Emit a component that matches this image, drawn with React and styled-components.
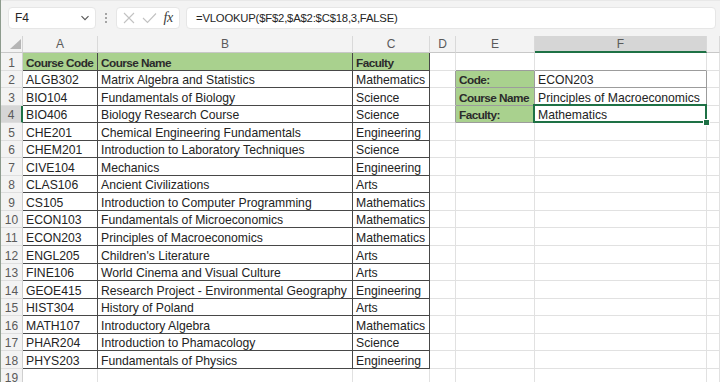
import styled, { createGlobalStyle, css } from 'styled-components';

const GlobalStyle = createGlobalStyle`
  html, body {
    margin: 0;
    padding: 0;
    background: #ffffff;
  }
`;

const GREEN = '#a9d18e';
const TABLE_LINE = '#474747';
const GRID_LINE = '#e1e1e1';
const BOX_LINE = '#9c9c9c';
const SELECT = '#1e7145';

const COLS = ['A', 'B', 'C', 'D', 'E', 'F', 'G'];

const courses = [
  ['Course Code', 'Course Name', 'Faculty'],
  ['ALGB302', 'Matrix Algebra and Statistics', 'Mathematics'],
  ['BIO104', 'Fundamentals of Biology', 'Science'],
  ['BIO406', 'Biology Research Course', 'Science'],
  ['CHE201', 'Chemical Engineering Fundamentals', 'Engineering'],
  ['CHEM201', 'Introduction to Laboratory Techniques', 'Science'],
  ['CIVE104', 'Mechanics', 'Engineering'],
  ['CLAS106', 'Ancient Civilizations', 'Arts'],
  ['CS105', 'Introduction to Computer Programming', 'Mathematics'],
  ['ECON103', 'Fundamentals of Microeconomics', 'Mathematics'],
  ['ECON203', 'Principles of Macroeconomics', 'Mathematics'],
  ['ENGL205', "Children's Literature", 'Arts'],
  ['FINE106', 'World Cinema and Visual Culture', 'Arts'],
  ['GEOE415', 'Research Project - Environmental Geography', 'Engineering'],
  ['HIST304', 'History of Poland', 'Arts'],
  ['MATH107', 'Introductory Algebra', 'Mathematics'],
  ['PHAR204', 'Introduction to Phamacology', 'Science'],
  ['PHYS203', 'Fundamentals of Physics', 'Engineering'],
];

const lookup = [
  ['Code:', 'ECON203'],
  ['Course Name', 'Principles of Macroeconomics'],
  ['Faculty:', 'Mathematics'],
];

const Window = styled.div`
  width: 720px;
  height: 382px;
  overflow: hidden;
  display: flex;
  flex-direction: column;
  border-left: 1px solid #8d9b8d;
  box-sizing: border-box;
  font-family: 'Liberation Sans', Arial, sans-serif;
  background: #ffffff;
`;

const FormulaBar = styled.div`
  height: 36px;
  flex: none;
  display: flex;
  align-items: flex-start;
  padding: 6px 0 0 7px;
  box-sizing: border-box;
  background: #f3f3f3;
  border-top: 1px solid #e8e8e8;
`;

const NameBox = styled.div`
  width: 88px;
  height: 22px;
  box-sizing: border-box;
  display: flex;
  align-items: center;
  justify-content: space-between;
  padding: 0 4px 0 6px;
  background: #ffffff;
  border: 1px solid #e6e6e6;
  border-radius: 4px;
  font-size: 12px;
  color: #262626;
`;

const Grip = styled.div`
  width: 20px;
  height: 22px;
  display: flex;
  flex-direction: column;
  align-items: center;
  justify-content: center;
  gap: 2px;

  & span {
    width: 2px;
    height: 2px;
    border-radius: 1px;
    background: #8a8a8a;
  }
`;

const ButtonGroup = styled.div`
  width: 64px;
  height: 22px;
  box-sizing: border-box;
  display: flex;
  align-items: center;
  justify-content: space-around;
  padding: 0 3px;
  background: #ffffff;
  border: 1px solid #e6e6e6;
  border-radius: 4px;
`;

const Fx = styled.span`
  font-family: 'Liberation Serif', 'Times New Roman', serif;
  font-style: italic;
  font-size: 14px;
  color: #3a3a3a;
  letter-spacing: -0.5px;
`;

const FormulaInput = styled.div`
  flex: 1;
  height: 22px;
  margin: 0 4px 0 6px;
  box-sizing: border-box;
  display: flex;
  align-items: center;
  padding-left: 9px;
  background: #ffffff;
  border: 1px solid #e6e6e6;
  border-radius: 4px;
  font-size: 11.3px;
  letter-spacing: -0.2px;
  color: #262626;
`;

const Sheet = styled.div`
  flex: 1;
  display: grid;
  grid-template-columns: 22px 75px 255px 77px 26px 79px 172px 1fr;
  grid-template-rows: 17px;
  grid-auto-rows: 17.55px;
  overflow: hidden;
`;

const headerBase = css`
  box-sizing: border-box;
  display: flex;
  align-items: center;
  justify-content: center;
  font-size: 12px;
  color: #5a5a5a;
  background: ${(p) => (p.$active ? '#d6d6d6' : '#f3f3f3')};
`;

const Corner = styled.div`
  ${headerBase};
  position: relative;
  border-right: 1px solid #d4d4d4;
  border-bottom: 1px solid #c8c8c8;

  & svg {
    position: absolute;
    left: 9px;
    top: 3px;
  }
`;

const ColHeader = styled.div`
  ${headerBase};
  border-right: 1px solid #d9d9d9;
  border-bottom: ${(p) =>
    p.$active ? `2px solid ${SELECT}` : '1px solid #c8c8c8'};
`;

const RowHeader = styled.div`
  ${headerBase};
  align-items: flex-end;
  line-height: 14px;
  border-right: ${(p) =>
    p.$active ? `2px solid ${SELECT}` : '1px solid #cfcfcf'};
  border-bottom: 1px solid #dedede;
`;

const Cell = styled.div`
  position: relative;
  box-sizing: border-box;
  display: flex;
  align-items: flex-end;
  padding: 0 0 0 3px;
  line-height: 14px;
  font-size: ${(p) => (p.$bold ? '11.8px' : '12.2px')};
  white-space: nowrap;
  overflow: visible;
  color: #232323;
  background: ${(p) => p.$fill || '#ffffff'};
  border-right: 1px solid ${(p) => p.$right || GRID_LINE};
  border-bottom: 1px solid ${(p) => p.$bottom || GRID_LINE};
  font-weight: ${(p) => (p.$bold ? 700 : 400)};
  letter-spacing: ${(p) => (p.$bold ? '-0.55px' : '0')};
  color: ${(p) => (p.$bold ? '#2b2b2b' : '#232323')};

  ${(p) =>
    p.$selected &&
    css`
      &::after {
        content: '';
        position: absolute;
        left: -2px;
        top: -2px;
        right: -1px;
        bottom: -1px;
        border: 2px solid ${SELECT};
        pointer-events: none;
      }
      &::before {
        content: '';
        position: absolute;
        right: -4px;
        bottom: -4px;
        width: 5px;
        height: 5px;
        background: ${SELECT};
        border: 1px solid #ffffff;
        z-index: 2;
      }
    `}
`;

function cellProps(row, col) {
  // row is 1-based sheet row, col is 0-based index into COLS
  const props = { text: '' };
  const inTable = row <= 18 && col <= 2;
  if (inTable) {
    props.text = courses[row - 1][col];
    props.$right = TABLE_LINE;
    props.$bottom = TABLE_LINE;
    if (row === 1) {
      props.$fill = GREEN;
      props.$bold = true;
    }
  }
  const inBox = row >= 2 && row <= 4;
  if (col === 3 && inBox) props.$right = BOX_LINE;
  if (col === 4 || col === 5) {
    if (row === 1) props.$bottom = BOX_LINE;
    if (inBox) {
      props.text = lookup[row - 2][col - 4];
      props.$right = BOX_LINE;
      props.$bottom = BOX_LINE;
      if (col === 4) {
        props.$fill = GREEN;
        props.$bold = true;
      }
    }
  }
  if (col === 5 && row === 4) props.$selected = true;
  return props;
}

function App() {
  const rows = Array.from({ length: 19 }, (_, i) => i + 1);

  return (
    <Window>
      <GlobalStyle />
      <FormulaBar>
        <NameBox>
          F4
          <svg width="12" height="12" viewBox="0 0 12 12">
            <path
              d="M2.5 4.2 L6 7.7 L9.5 4.2"
              fill="none"
              stroke="#555"
              strokeWidth="1.1"
            />
          </svg>
        </NameBox>
        <Grip>
          <span />
          <span />
          <span />
        </Grip>
        <ButtonGroup>
          <svg width="12" height="12" viewBox="0 0 12 12">
            <path
              d="M1 1 L11 11 M11 1 L1 11"
              stroke="#c2c2c2"
              strokeWidth="1.1"
            />
          </svg>
          <svg width="15" height="12" viewBox="0 0 15 12">
            <path
              d="M1 6 L5.5 10.5 L14 1.5"
              fill="none"
              stroke="#c2c2c2"
              strokeWidth="1.1"
            />
          </svg>
          <Fx>fx</Fx>
        </ButtonGroup>
        <FormulaInput>=VLOOKUP($F$2,$A$2:$C$18,3,FALSE)</FormulaInput>
      </FormulaBar>

      <Sheet>
        <Corner>
          <svg width="11" height="10" viewBox="0 0 11 10">
            <path d="M11 0 L11 10 L0 10 Z" fill="#b5b5b5" />
          </svg>
        </Corner>
        {COLS.map((c) => (
          <ColHeader key={c} $active={c === 'F'}>
            {c === 'G' ? '' : c}
          </ColHeader>
        ))}
        {rows.map((row) => [
          <RowHeader key={`h${row}`} $active={row === 4}>
            {row}
          </RowHeader>,
          ...COLS.map((c, col) => {
            const { text, ...rest } = cellProps(row, col);
            return (
              <Cell key={`${c}${row}`} {...rest}>
                {text}
              </Cell>
            );
          }),
        ])}
      </Sheet>
    </Window>
  );
}

export default App;
